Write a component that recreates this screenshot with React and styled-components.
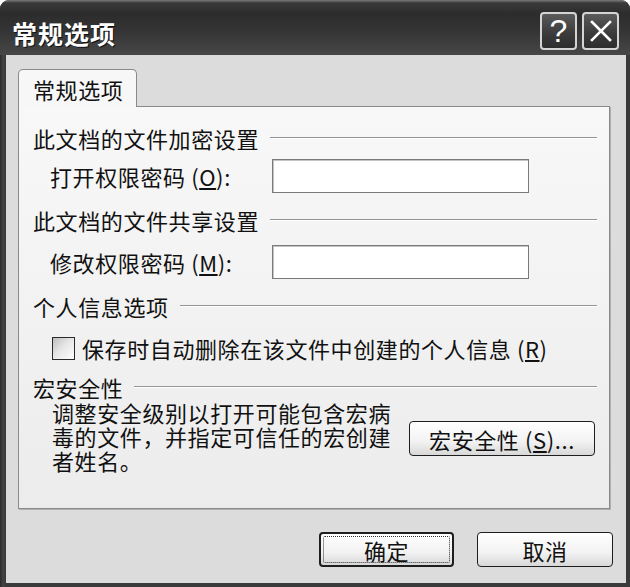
import React from "react";
import styled, { createGlobalStyle } from "styled-components";

const GlobalStyle = createGlobalStyle`
  html, body {
    margin: 0;
    padding: 0;
    background: #ffffff;
  }
  * {
    box-sizing: border-box;
  }
`;

const cjk = `"Noto Sans CJK SC", "Noto Sans", sans-serif`;

const App = () => {
  return (
    <>
      <GlobalStyle />
      <Window>
        <TitleBar>
          <Title>常规选项</Title>
          <Caption>
            <CaptionButton aria-label="帮助">?</CaptionButton>
            <CaptionButton aria-label="关闭">
              <svg width="24" height="24" viewBox="0 0 24 24">
                <path
                  d="M3 3 L21 21 M21 3 L3 21"
                  stroke="#ffffff"
                  strokeWidth="2.6"
                  strokeLinecap="square"
                />
              </svg>
            </CaptionButton>
          </Caption>
        </TitleBar>
        <Body>
          <TabStrip>
            <Tab>常规选项</Tab>
          </TabStrip>
          <Panel>
            <Heading>
              <span>此文档的文件加密设置</span>
              <Rule />
            </Heading>
            <FieldRow $top={8}>
              <Label>
                打开权限密码 (<u>O</u>):
              </Label>
              <TextBox type="password" />
            </FieldRow>

            <Heading $top={14}>
              <span>此文档的文件共享设置</span>
              <Rule />
            </Heading>
            <FieldRow $top={12}>
              <Label>
                修改权限密码 (<u>M</u>):
              </Label>
              <TextBox type="password" />
            </FieldRow>

            <Heading $top={14}>
              <span>个人信息选项</span>
              <Rule />
            </Heading>
            <CheckRow>
              <CheckBox />
              <span>
                保存时自动删除在该文件中创建的个人信息 (<u>R</u>)
              </span>
            </CheckRow>

            <Heading $top={13}>
              <span>宏安全性</span>
              <Rule />
            </Heading>
            <MacroRow>
              <Note>
                调整安全级别以打开可能包含宏病
                <br />
                毒的文件，并指定可信任的宏创建
                <br />
                者姓名。
              </Note>
              <PushButton $width={186} $top={21}>
                宏安全性 (<u>S</u>)...
              </PushButton>
            </MacroRow>
          </Panel>
          <Footer>
            <PushButton $width={135} $default>
              <Focus>确定</Focus>
            </PushButton>
            <PushButton $width={136}>取消</PushButton>
          </Footer>
        </Body>
      </Window>
    </>
  );
};

const Window = styled.div`
  width: 630px;
  height: 587px;
  display: flex;
  flex-direction: column;
  background: linear-gradient(90deg, #2a2a2a 0, #444 3px, #3a3a3a 6px);
  border-radius: 9px 9px 0 0;
  overflow: hidden;
  font-family: ${cjk};
  color: #111;
`;

const TitleBar = styled.div`
  height: 55px;
  flex-shrink: 0;
  display: flex;
  align-items: flex-start;
  justify-content: space-between;
  padding: 0 11px 0 12px;
  background: linear-gradient(
    #7a7a7a 0,
    #3a3a3a 3px,
    #2c2c2c 14px,
    #363636 60%,
    #474747 100%
  );
`;

const Title = styled.div`
  margin-top: 15px;
  color: #ffffff;
  font-size: 25px;
  line-height: 36px;
  font-weight: 700;
  letter-spacing: 1px;
  text-shadow: 1px 1px 0 #111;
`;

const Caption = styled.div`
  display: flex;
  gap: 5px;
  margin-top: 12px;
`;

const CaptionButton = styled.div`
  width: 37px;
  height: 38px;
  display: flex;
  align-items: center;
  justify-content: center;
  border: 2px solid #d4d4d4;
  border-radius: 4px;
  background: linear-gradient(#5a5a5a, #3a3a3a 60%, #2e2e2e);
  color: #ffffff;
  font-family: "Liberation Sans", Arial, sans-serif;
  font-size: 32px;
  line-height: 1;
`;

const Body = styled.div`
  flex: 1;
  display: flex;
  flex-direction: column;
  margin: 0 4px 5px 6px;
  padding: 14px 16px 16px 12px;
  background: #dcdcdc;
`;

const TabStrip = styled.div`
  display: flex;
  position: relative;
  z-index: 1;
`;

const Tab = styled.div`
  width: 119px;
  height: 38px;
  margin-bottom: -1px;
  padding-left: 14px;
  border: 1px solid #8a8a8a;
  border-bottom: none;
  border-radius: 5px 5px 0 0;
  background: #f7f7f7;
  font-size: 22px;
  line-height: 38px;
  letter-spacing: 0.6px;
`;

const Panel = styled.div`
  height: 403px;
  display: flex;
  flex-direction: column;
  padding: 18px 12px 0 14px;
  border: 1px solid #8a8a8a;
  background: linear-gradient(#f8f8f8, #ececec);
  box-shadow: 1px 1px 0 #b0b0b0;
  font-size: 22px;
  letter-spacing: 0.6px;
`;

const Heading = styled.div`
  display: flex;
  align-items: center;
  height: 26px;
  line-height: 26px;
  margin-top: ${(p) => p.$top || 0}px;
  white-space: nowrap;
`;

const Rule = styled.div`
  flex: 1;
  margin-left: 11px;
  border-top: 1px solid #949494;
  border-bottom: 1px solid #ffffff;
`;

const FieldRow = styled.div`
  display: flex;
  align-items: center;
  margin-top: ${(p) => p.$top}px;
  padding-left: 17px;
`;

const Label = styled.div`
  width: 222px;
  white-space: nowrap;
`;

const TextBox = styled.input`
  width: 257px;
  height: 34px;
  border: 1px solid #7a7a7a;
  box-shadow: inset 1px 1px 0 #c4c4c4;
  background: #ffffff;
  outline: none;
`;

const CheckRow = styled.div`
  display: flex;
  align-items: center;
  height: 26px;
  margin-top: 16px;
  padding-left: 19px;
  white-space: nowrap;
`;

const CheckBox = styled.div`
  width: 23px;
  height: 23px;
  margin-right: 7px;
  border: 1px solid #2a2a2a;
  background: linear-gradient(135deg, #bdbdbd 0, #e6e6e6 45%, #ffffff 100%);
`;

const MacroRow = styled.div`
  display: flex;
  justify-content: space-between;
  align-items: flex-start;
  padding-left: 19px;
  padding-right: 2px;
`;

const Note = styled.div`
  line-height: 24px;
  white-space: nowrap;
`;

const PushButton = styled.div`
  width: ${(p) => p.$width}px;
  height: 35px;
  margin-top: ${(p) => p.$top || 0}px;
  display: flex;
  align-items: center;
  justify-content: center;
  padding: ${(p) => (p.$default ? "2px" : "0")};
  border: ${(p) => (p.$default ? "2px" : "1px")} solid #1e1e1e;
  border-radius: 4px;
  background: linear-gradient(#ffffff, #f2f2f2 60%, #d8d8d8);
  font-family: ${cjk};
  font-size: 22px;
  letter-spacing: 0.6px;
  white-space: nowrap;
`;

const Focus = styled.div`
  flex: 1;
  align-self: stretch;
  display: flex;
  align-items: center;
  justify-content: center;
  border: 1px dotted #333;
  border-radius: 2px;
`;

const Footer = styled.div`
  display: flex;
  justify-content: flex-end;
  gap: 23px;
  margin-top: 23px;
  margin-right: -3px;
`;

export default App;
